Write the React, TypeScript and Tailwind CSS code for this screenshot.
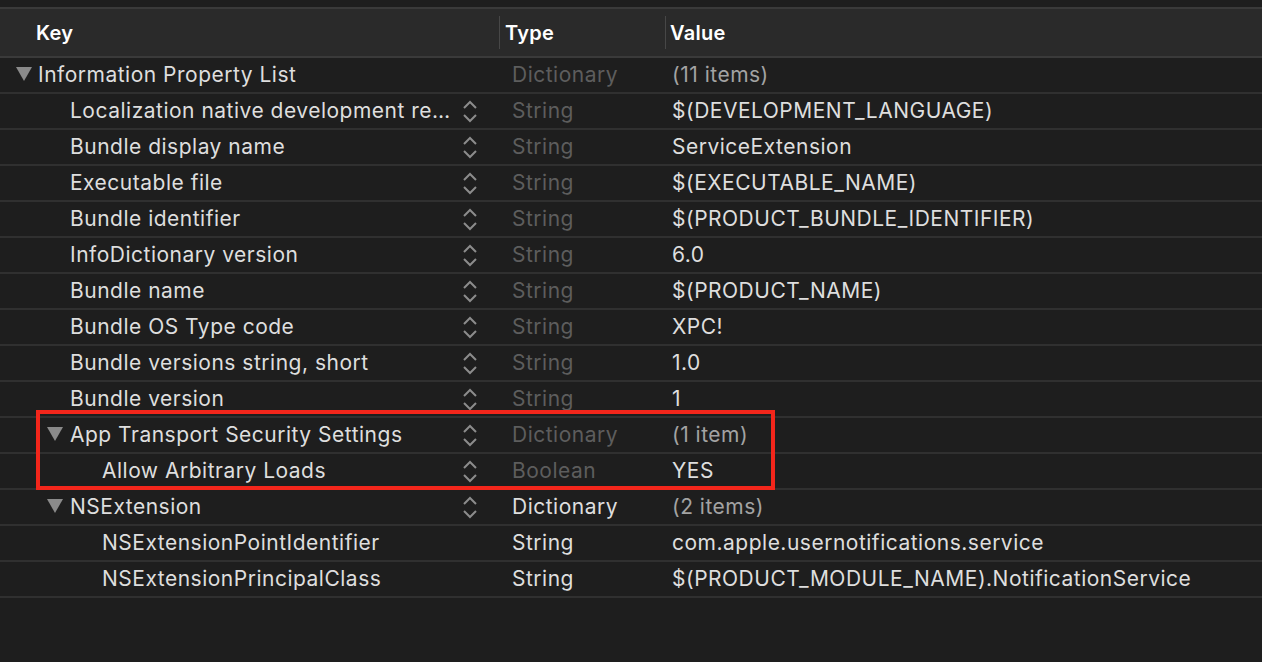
import React from 'react';

type Row = {
    key: string;
    type: string;
    value: string;
    level: number;
    open?: boolean;
    stepper?: boolean;
    dimType?: boolean;
    dimValue?: boolean;
};

const rows: Row[] = [
    { key: 'Information Property List', type: 'Dictionary', value: '(11 items)', level: 0, open: true, dimType: true, dimValue: true },
    { key: 'Localization native development re…', type: 'String', value: '$(DEVELOPMENT_LANGUAGE)', level: 1, stepper: true, dimType: true },
    { key: 'Bundle display name', type: 'String', value: 'ServiceExtension', level: 1, stepper: true, dimType: true },
    { key: 'Executable file', type: 'String', value: '$(EXECUTABLE_NAME)', level: 1, stepper: true, dimType: true },
    { key: 'Bundle identifier', type: 'String', value: '$(PRODUCT_BUNDLE_IDENTIFIER)', level: 1, stepper: true, dimType: true },
    { key: 'InfoDictionary version', type: 'String', value: '6.0', level: 1, stepper: true, dimType: true },
    { key: 'Bundle name', type: 'String', value: '$(PRODUCT_NAME)', level: 1, stepper: true, dimType: true },
    { key: 'Bundle OS Type code', type: 'String', value: 'XPC!', level: 1, stepper: true, dimType: true },
    { key: 'Bundle versions string, short', type: 'String', value: '1.0', level: 1, stepper: true, dimType: true },
    { key: 'Bundle version', type: 'String', value: '1', level: 1, stepper: true, dimType: true },
    { key: 'App Transport Security Settings', type: 'Dictionary', value: '(1 item)', level: 1, open: true, stepper: true, dimType: true, dimValue: true },
    { key: 'Allow Arbitrary Loads', type: 'Boolean', value: 'YES', level: 2, stepper: true, dimType: true },
    { key: 'NSExtension', type: 'Dictionary', value: '(2 items)', level: 1, open: true, stepper: true, dimValue: true },
    { key: 'NSExtensionPointIdentifier', type: 'String', value: 'com.apple.usernotifications.service', level: 2 },
    { key: 'NSExtensionPrincipalClass', type: 'String', value: '$(PRODUCT_MODULE_NAME).NotificationService', level: 2 },
];

const indent = ['pl-[38px]', 'pl-[70px]', 'pl-[102px]'];
const triangleLeft = ['left-[16px]', 'left-[47px]', 'left-[79px]'];

const Triangle = () => (
    <svg width="16" height="14" viewBox="0 0 16 14" className="block">
        <path d="M0 0 H16 L8 14 Z" fill="#8a8a8a" />
    </svg>
);

const Stepper = () => (
    <svg width="16" height="26" viewBox="0 0 16 26" className="block" fill="none" stroke="#8c8c8c" strokeWidth="2">
        <path d="M2 9 L8 3 L14 9" />
        <path d="M2 16 L8 22 L14 16" />
    </svg>
);

const PlistRow = ({ row }: { row: Row }) => (
    <div className="flex h-[36px] border-b-2 border-[#303030] text-[21px] leading-[32px] tracking-[0.5px] text-[#dedede]">
        <div className={`relative flex w-[499px] shrink-0 items-center ${indent[row.level]}`}>
            {row.open && (
                <span className={`absolute top-[9px] ${triangleLeft[row.level]}`}>
                    <Triangle />
                </span>
            )}
            <span className="whitespace-nowrap">{row.key}</span>
            {row.stepper && (
                <span className="absolute left-[462px] top-[5px]">
                    <Stepper />
                </span>
            )}
        </div>
        <div className={`flex w-[166px] shrink-0 items-center pl-[13px] ${row.dimType ? 'text-[#5d5d5d]' : ''}`}>
            {row.type}
        </div>
        <div className={`flex flex-1 items-center whitespace-nowrap pl-[7px] ${row.dimValue ? 'text-[#a3a3a3]' : ''}`}>
            {row.value}
        </div>
    </div>
);

export default function App() {
    return (
        <div className="relative h-[662px] w-[1262px] overflow-hidden bg-[#1e1e1e] font-['Inter','Liberation_Sans',sans-serif]">
            <div className="h-[7px]" />
            <div className="flex h-[51px] border-y-2 border-[#3a3a3a] bg-[#2a2a2a] text-[20px] font-semibold tracking-[0.3px] text-white">
                <div className="flex w-[499px] shrink-0 items-center pl-[36px]">Key</div>
                <div className="my-[7px] w-px bg-[#474747]" />
                <div className="flex w-[165px] shrink-0 items-center pl-[5px]">Type</div>
                <div className="my-[7px] w-px bg-[#474747]" />
                <div className="flex flex-1 items-center pl-[4px]">Value</div>
            </div>
            <div>
                {rows.map((r) => (
                    <PlistRow key={r.key} row={r} />
                ))}
            </div>
            <div className="pointer-events-none absolute left-[36px] top-[410px] h-[80px] w-[739px] border-4 border-[#f3261b]" />
        </div>
    );
}
